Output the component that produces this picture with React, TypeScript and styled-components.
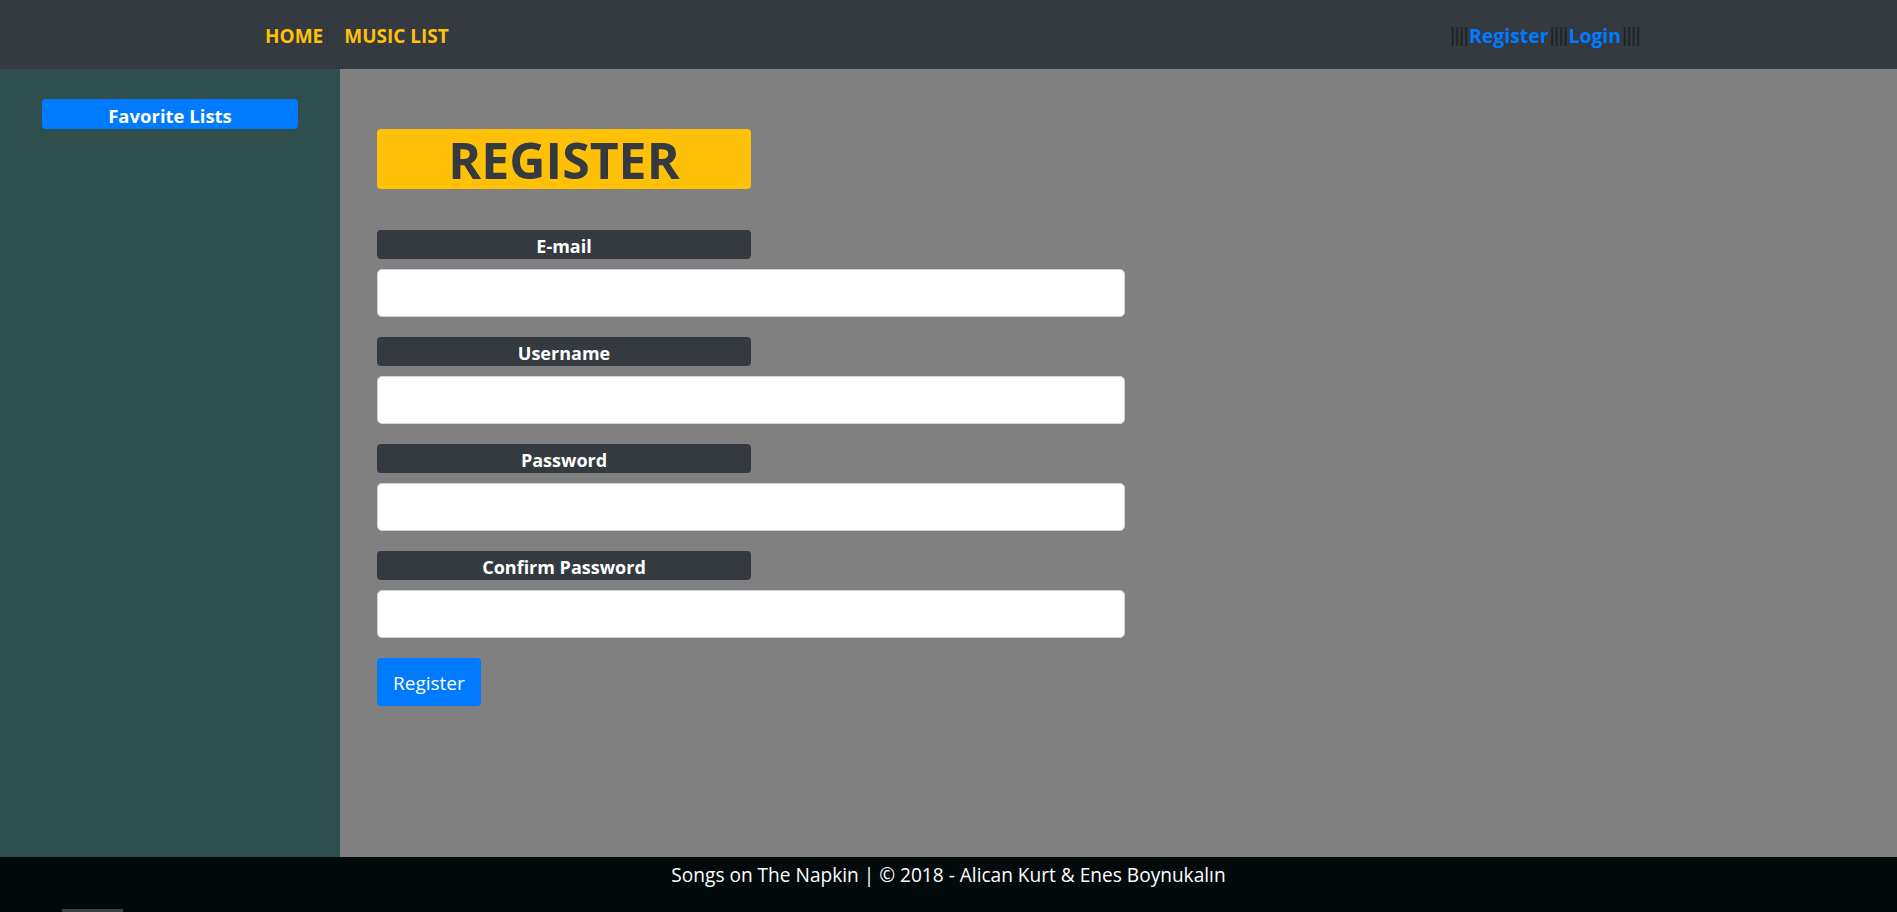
import styled, { createGlobalStyle } from "styled-components";

const GlobalStyle = createGlobalStyle`
  html, body {
    margin: 0;
    padding: 0;
    background: #030a0c;
  }
  body {
    font-family: "Open Sans", "Noto Sans", sans-serif;
  }
  * {
    box-sizing: border-box;
  }
`;

const Page = styled.div`
  min-height: 100vh;
  display: flex;
  flex-direction: column;
`;

const Navbar = styled.header`
  height: 69px;
  background: #343a40;
  display: flex;
  align-items: center;
  justify-content: space-between;
  padding: 2px 257px 0 265px;
`;

const NavLinks = styled.nav`
  display: flex;
  gap: 21px;
`;

const NavLink = styled.a`
  color: #ffc107;
  font-size: 19px;
  font-weight: 700;
  text-decoration: none;
  cursor: pointer;
`;

const AuthLinks = styled.div`
  display: flex;
  align-items: center;
  font-size: 19.4px;
  font-weight: 700;
`;

const Bars = styled.span`
  color: #1e2124;
  font-family: "Liberation Sans", Arial, sans-serif;
  font-size: 20px;
  font-weight: 400;
  letter-spacing: -0.7px;
`;

const AuthLink = styled.a`
  color: #007bff;
  text-decoration: none;
  cursor: pointer;
  margin: 0 1px;
`;

const Middle = styled.div`
  flex: 1;
  display: flex;
`;

const Sidebar = styled.aside`
  width: 340px;
  background: #2f4f4f;
  padding-top: 30px;
`;

const SideButton = styled.button`
  display: block;
  width: 256px;
  height: 30px;
  margin: 0 auto;
  border: none;
  border-radius: 4px;
  background: #007bff;
  color: #fff;
  font-family: inherit;
  font-size: 18.5px;
  font-weight: 700;
  line-height: 26px;
  padding: 4px 0 0;
`;

const Content = styled.main`
  flex: 1;
  background: #808080;
  padding: 60px 37px;
`;

const Form = styled.form`
  width: 748px;
  display: flex;
  flex-direction: column;
`;

const Title = styled.h1`
  width: 374px;
  height: 60px;
  margin: 0 0 41px;
  background: #ffc107;
  border-radius: 4px;
  color: #343a40;
  font-size: 50px;
  font-weight: 700;
  line-height: 62px;
  text-align: center;
`;

const Field = styled.div`
  display: flex;
  flex-direction: column;
  gap: 10px;
  margin-bottom: 20px;
`;

const Label = styled.label`
  width: 374px;
  height: 29px;
  padding-top: 3px;
  background: #343a40;
  border-radius: 4px;
  color: #fff;
  font-size: 18px;
  font-weight: 700;
  line-height: 26px;
  text-align: center;
`;

const Input = styled.input`
  width: 100%;
  height: 48px;
  border: 1px solid #ced4da;
  border-radius: 5px;
  background: #fff;
  padding: 8px 16px;
  font-family: inherit;
  font-size: 20px;
`;

const SubmitButton = styled.button`
  align-self: flex-start;
  height: 48px;
  padding: 2px 16px 0;
  border: none;
  border-radius: 4px;
  background: #007bff;
  color: #fff;
  font-family: inherit;
  font-size: 19px;
  font-weight: 400;
`;

const Footer = styled.footer`
  height: 55px;
  background: #030a0c;
  display: flex;
  flex-direction: column;
  justify-content: space-between;
  color: #fff;
  font-size: 19.1px;
  text-align: center;
`;

const FooterText = styled.p`
  margin: 4px 0 0;
  line-height: 29px;
`;

const ScrollStub = styled.div`
  width: 61px;
  height: 3px;
  margin-left: 62px;
  background: #3a3f44;
`;

const fields = [
  { id: "email", label: "E-mail", type: "email" },
  { id: "username", label: "Username", type: "text" },
  { id: "password", label: "Password", type: "password" },
  { id: "confirm", label: "Confirm Password", type: "password" },
];

function App() {
  return (
    <Page>
      <GlobalStyle />
      <Navbar>
        <NavLinks>
          <NavLink>HOME</NavLink>
          <NavLink>MUSIC LIST</NavLink>
        </NavLinks>
        <AuthLinks>
          <Bars>||||</Bars>
          <AuthLink>Register</AuthLink>
          <Bars>||||</Bars>
          <AuthLink>Login</AuthLink>
          <Bars>||||</Bars>
        </AuthLinks>
      </Navbar>
      <Middle>
        <Sidebar>
          <SideButton>Favorite Lists</SideButton>
        </Sidebar>
        <Content>
          <Form onSubmit={(e) => e.preventDefault()}>
            <Title>REGISTER</Title>
            {fields.map((f) => (
              <Field key={f.id}>
                <Label htmlFor={f.id}>{f.label}</Label>
                <Input id={f.id} type={f.type} />
              </Field>
            ))}
            <SubmitButton type="submit">Register</SubmitButton>
          </Form>
        </Content>
      </Middle>
      <Footer>
        <FooterText>Songs on The Napkin | © 2018 - Alican Kurt &amp; Enes Boynukalın</FooterText>
        <ScrollStub />
      </Footer>
    </Page>
  );
}

export default App;
